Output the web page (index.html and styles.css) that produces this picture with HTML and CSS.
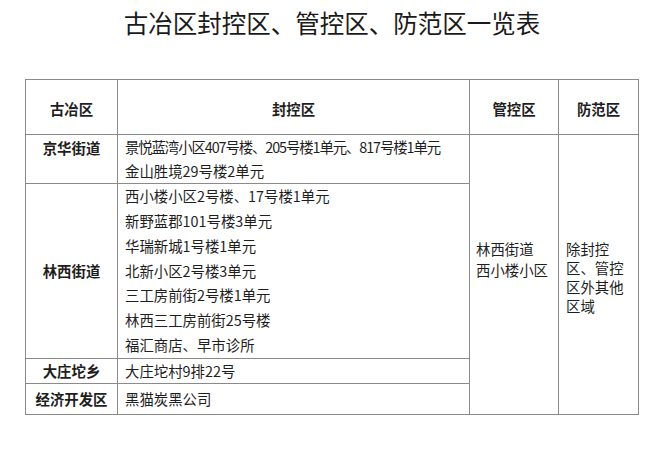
FILE: index.html
```html
<!DOCTYPE html>
<html lang="zh-CN">
<head>
<meta charset="utf-8">
<title>古冶区封控区、管控区、防范区一览表</title>
<link rel="stylesheet" href="styles.css">
</head>
<body>
<div class="page">
  <h1 class="title">古冶区封控区、管控区、防范区一览表</h1>
  <table class="list">
    <colgroup>
      <col class="c1"><col class="c2"><col class="c3"><col class="c4">
    </colgroup>
    <thead>
      <tr class="r-head">
        <th>古冶区</th>
        <th>封控区</th>
        <th>管控区</th>
        <th>防范区</th>
      </tr>
    </thead>
    <tbody>
      <tr class="r-jh">
        <td class="street top">京华街道</td>
        <td class="sealed"><span class="tight">景悦蓝湾小区407号楼、205号楼1单元、817号楼1单元</span><br>金山胜境29号楼2单元</td>
        <td class="ctrl" rowspan="4">林西街道<br>西小楼小区</td>
        <td class="prev" rowspan="4">除封控区、管控区外其他区域</td>
      </tr>
      <tr class="r-lx">
        <td class="street">林西街道</td>
        <td class="sealed">西小楼小区2号楼、17号楼1单元<br>新野蓝郡101号楼3单元<br>华瑞新城1号楼1单元<br>北新小区2号楼3单元<br>三工房前街2号楼1单元<br>林西三工房前街25号楼<br>福汇商店、早市诊所</td>
      </tr>
      <tr class="r-dz">
        <td class="street">大庄坨乡</td>
        <td class="sealed">大庄坨村9排22号</td>
      </tr>
      <tr class="r-jj">
        <td class="street">经济开发区</td>
        <td class="sealed">黑猫炭黑公司</td>
      </tr>
    </tbody>
  </table>
</div>
</body>
</html>
```

FILE: styles.css
```css
html, body {
  margin: 0;
  padding: 0;
  background: #ffffff;
}

body {
  font-family: "Noto Sans CJK SC", "Noto Sans", sans-serif;
  color: #1e1e1e;
}

.page {
  width: 660px;
  height: 450px;
  overflow: hidden;
}

.title {
  margin: 0;
  padding-left: 4px;
  height: 46px;
  line-height: 46px;
  font-size: 24.5px;
  font-weight: 400;
  color: #1a1a1a;
  text-align: center;
  white-space: nowrap;
}

.list {
  margin: 33px 0 0 25px;
  border-collapse: collapse;
  table-layout: fixed;
  width: 613px;
  font-size: 14.4px;
}

.c1 { width: 92px; }
.c2 { width: 352px; }
.c3 { width: 89px; }
.c4 { width: 80px; }

.list th,
.list td {
  border: 1px solid #8a8a8a;
  padding: 0 7px;
  line-height: 24px;
  vertical-align: middle;
}

.list th {
  font-weight: 700;
  text-align: center;
  padding-top: 3px;
}

.r-head { height: 55px; }
.r-jh { height: 49px; }
.r-lx { height: 175px; }
.r-lx .sealed { line-height: 24.8px; }
.r-dz { height: 25px; }
.r-jj { height: 31px; }

.list .street {
  font-weight: 700;
  text-align: center;
  white-space: nowrap;
  padding: 0 2px;
}

.list .street.top {
  vertical-align: top;
  padding-top: 1px;
}

.list .sealed {
  white-space: nowrap;
  text-align: left;
}

.tight {
  letter-spacing: -1.1px;
}

.list .ctrl {
  line-height: 21px;
  padding: 0 4px 31px 6px;
}

.list .prev {
  line-height: 19px;
  padding: 5px 6px 0 7px;
}
```
